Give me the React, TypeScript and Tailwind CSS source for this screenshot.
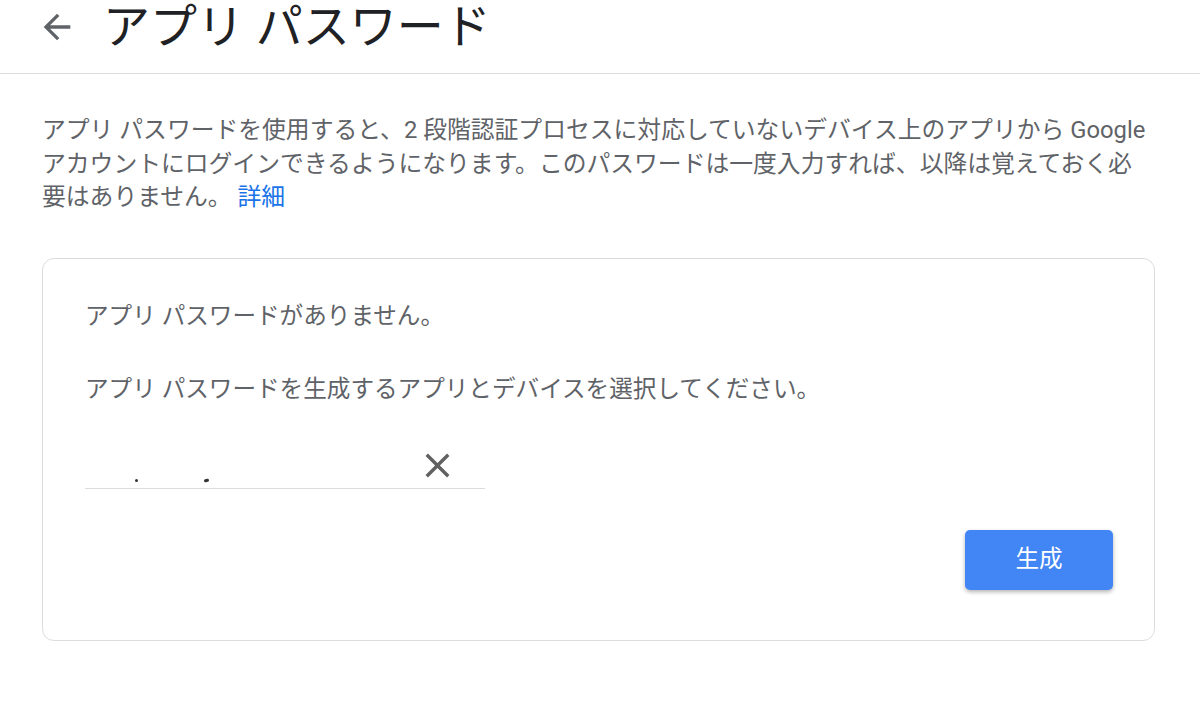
import React from 'react';

const font = { fontFamily: 'Roboto, "Noto Sans CJK JP", sans-serif' };

const BackIcon = () => (
  <svg className="w-[40px] h-[40px] text-[#5f6368]" viewBox="0 0 24 24" fill="currentColor">
    <path d="M20 11H7.83l5.59-5.59L12 4l-8 8 8 8 1.41-1.41L7.83 13H20v-2z" />
  </svg>
);

const CloseIcon = () => (
  <svg className="w-[41px] h-[41px] text-[#616161]" viewBox="0 0 24 24" fill="currentColor">
    <path d="M19 6.41L17.59 5 12 10.59 6.41 5 5 6.41 10.59 12 5 17.59 6.41 19 12 13.41 17.59 19 19 17.59 13.41 12z" />
  </svg>
);

export default function App() {
  return (
    <div className="w-[1200px] h-[716px] bg-white overflow-hidden" style={font}>
      <header className="h-[74px] border-b border-[#dadce0] flex items-start">
        <div className="ml-[37px] mt-[7px]">
          <BackIcon />
        </div>
        <h1 className="ml-[26px] -mt-[3px] text-[47px] leading-[60px] text-[#202124] whitespace-nowrap">アプリ パスワード</h1>
      </header>

      <p className="mt-[40px] px-[42px] text-[23.8px] leading-[33.5px] text-[#5f6368] whitespace-nowrap">
        アプリ パスワードを使用すると、2 段階認証プロセスに対応していないデバイス上のアプリから Google
        <br />
        アカウントにログインできるようになります。このパスワードは一度入力すれば、以降は覚えておく必
        <br />
        要はありません。 <span className="text-[#1a73e8]">詳細</span>
      </p>

      <div className="mt-[43px] ml-[42px] w-[1113px] h-[383px] border border-[#dadce0] rounded-[12px] pl-[42px] pr-[41px] pt-[40px]">
        <p className="text-[23.6px] leading-[34px] text-[#5f6368] whitespace-nowrap">アプリ パスワードがありません。</p>
        <p className="mt-[39px] text-[23.6px] leading-[34px] text-[#5f6368] whitespace-nowrap">アプリ パスワードを生成するアプリとデバイスを選択してください。</p>

        <div className="mt-[42px] w-[400px] h-[41px] border-b border-[#dadce0] flex items-center justify-between">
          <div className="flex items-end self-end pb-[6px] gap-[66px] pl-[50px]">
            <span className="block w-[3px] h-[3px] bg-[#333] rounded-full" />
            <span className="block w-[5px] h-[3px] bg-[#333] rounded-full -rotate-12" />
          </div>
          <div className="mr-[27px] -mt-[4px]">
            <CloseIcon />
          </div>
        </div>

        <div className="flex justify-end mt-[41px]">
          <button className="w-[148px] h-[60px] rounded-[5px] bg-[#4285f4] text-white text-[23.6px] shadow-[0_2px_4px_rgba(0,0,0,0.3)]">
            生成
          </button>
        </div>
      </div>
    </div>
  );
}
